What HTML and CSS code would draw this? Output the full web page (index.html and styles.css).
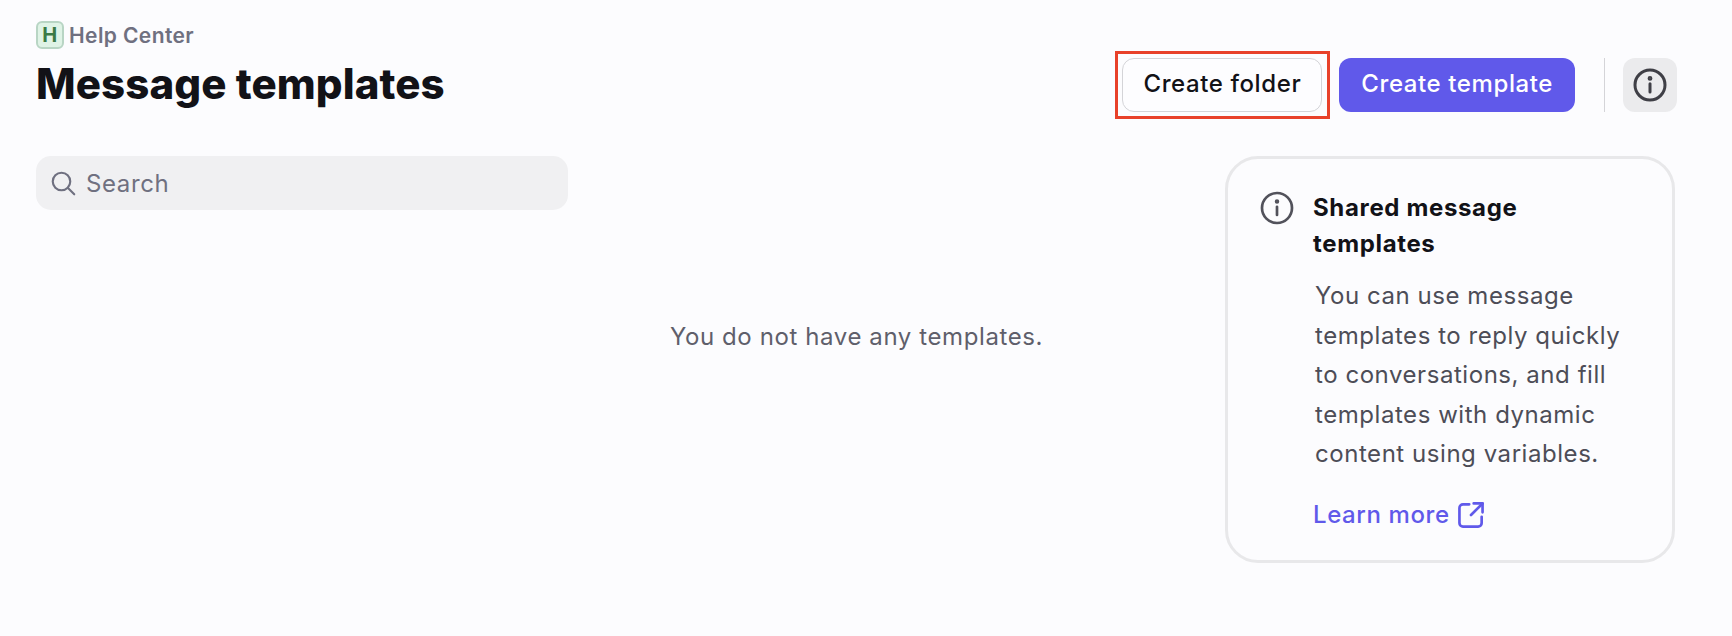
FILE: index.html
```html
<!DOCTYPE html>
<html lang="en">
<head>
  <meta charset="UTF-8" />
  <meta name="viewport" content="width=device-width, initial-scale=1.0"/>
  <title>Message templates</title>
  <link rel="stylesheet" href="styles.css">
</head>
<body>

  <header class="page-header">
    <div class="title-block">
      <div class="workspace">
        <span class="workspace-badge">H</span>
        <span>Help Center</span>
      </div>
      <h1>Message templates</h1>
    </div>
    <div class="actions">
      <button class="btn btn-outline">Create folder</button>
      <button class="btn btn-primary">Create template</button>
      <span class="divider"></span>
      <button class="btn-icon" aria-label="Info">
        <svg width="36" height="36" viewBox="0 0 24 24" fill="none" stroke="#3f3f46" stroke-width="2" stroke-linecap="round">
          <circle cx="12" cy="12" r="10"/>
          <path d="M12 11.200v5.400"/>
          <circle cx="12" cy="7.600" r="0.6" fill="#3f3f46"/>
        </svg>
      </button>
    </div>
  </header>

  <main class="content">
    <div class="search">
      <svg width="30" height="30" viewBox="0 0 24 24" fill="none" stroke="#6f7080" stroke-width="1.7" stroke-linecap="round">
        <circle cx="10.800" cy="10.800" r="7"/>
        <path d="M16 16l5 5"/>
      </svg>
      <input type="text" placeholder="Search">
    </div>

    <p class="empty">You do not have any templates.</p>

    <aside class="info-card">
      <svg class="info-card-icon" width="36" height="36" viewBox="0 0 24 24" fill="none" stroke="#52525b" stroke-width="1.800" stroke-linecap="round">
        <circle cx="12" cy="12" r="10"/>
        <path d="M12 11.200v5.400"/>
        <circle cx="12" cy="7.600" r="0.6" fill="#52525b"/>
      </svg>
      <div class="info-card-body">
        <h3>Shared message templates</h3>
        <p>You can use message templates to reply quickly to conversations, and fill templates with dynamic content using variables.</p>
        <a href="#" class="learn-more">
          Learn more
          <svg width="32" height="32" viewBox="0 0 18 18" fill="none" stroke="currentColor" stroke-width="1.5" stroke-linecap="round" stroke-linejoin="round">
            <path d="M8 3H4.500A2 2 0 0 0 2.500 5v8.500a2 2 0 0 0 2 2H13a2 2 0 0 0 2-2V10"/>
            <path d="M10.500 2.500h5v5"/>
            <path d="M15.500 2.500L9 9"/>
          </svg>
        </a>
      </div>
    </aside>
  </main>

</body>
</html>
```

FILE: styles.css
```css
:root {
  --bg-color: #fcfcfe;
  --text-color: #121217;
  --muted: #6f7080;
  --accent: #6059ea;
}

body {
  font-family: Inter, 'Liberation Sans', sans-serif;
  background-color: var(--bg-color);
  color: var(--text-color);
  margin: 0;
  padding: 21px 55px 0 36px;
}

.page-header {
  display: flex;
  justify-content: space-between;
  align-items: flex-end;
}

.workspace {
  display: flex;
  align-items: center;
  gap: 5px;
  font-size: 21px;
  font-weight: 600;
  letter-spacing: 0.4px;
  color: var(--muted);
}

.workspace-badge {
  width: 28px;
  height: 28px;
  box-sizing: border-box;
  display: flex;
  align-items: center;
  justify-content: center;
  background: #dff3e6;
  border: 2px solid #b8d5c4;
  border-radius: 6px;
  color: #3b7a45;
  font-weight: 700;
  font-size: 20px;
}

h1 {
  margin: 8px 0 1px;
  font-size: 42px;
  line-height: 54px;
  font-weight: 800;
  letter-spacing: 0.1px;
}

.actions {
  display: flex;
  align-items: center;
  gap: 17px;
}

.btn {
  height: 54px;
  box-sizing: border-box;
  padding: 0 21px 3px;
  font-family: inherit;
  font-size: 24px;
  font-weight: 450;
  letter-spacing: 0.6px;
  border-radius: 12px;
  border: 1px solid transparent;
}

.btn-outline {
  position: relative;
  padding: 0 20px 3px;
  background: #fdfdff;
  color: var(--text-color);
  border: 1px solid #d4d4d8;
}

/* red annotation box round the button */
.btn-outline::after {
  content: "";
  position: absolute;
  inset: -8px -9px -8px -8px;
  border: 3px solid #e8412a;
}

.btn-primary {
  background: var(--accent);
  color: white;
}

.divider {
  width: 1px;
  height: 54px;
  background: #d4d4d8;
  margin: 0 1px 0 12px;
}

.btn-icon {
  width: 54px;
  height: 54px;
  padding: 0;
  display: flex;
  align-items: center;
  justify-content: center;
  background: #ebebed;
  border: none;
  border-radius: 12px;
}

.content {
  display: grid;
  margin-top: 44px;
}

.content > * {
  grid-area: 1 / 1;
}

.search {
  width: 532px;
  height: 54px;
  box-sizing: border-box;
  padding: 0 12px;
  display: flex;
  align-items: center;
  gap: 8px;
  align-self: start;
  background: #f0f0f2;
  border-radius: 15px;
}

.search input {
  border: none;
  background: transparent;
  outline: none;
  flex: 1;
  font-family: inherit;
  font-size: 24px;
  letter-spacing: 0.6px;
  padding: 0;
}

.search input::placeholder {
  color: var(--muted);
  opacity: 1;
}

.empty {
  justify-self: center;
  margin: 163px 0 0;
  font-size: 24px;
  line-height: 36px;
  letter-spacing: 0.6px;
  color: #5f5f6b;
}

.info-card {
  justify-self: end;
  width: 450px;
  height: 407px;
  margin-right: 2px;
  box-sizing: border-box;
  padding: 31px 30px 31px 31px;
  display: flex;
  gap: 18px;
  border: 3px solid #e8e8ea;
  border-radius: 33px;
}

.info-card-icon {
  flex-shrink: 0;
}

.info-card h3 {
  margin: 0;
  font-size: 24px;
  line-height: 36px;
  font-weight: 700;
  letter-spacing: 0.65px;
}

.info-card p {
  margin: 14px 0 0 2px;
  font-size: 24px;
  line-height: 39.500px;
  letter-spacing: 0.55px;
  color: #4d4d57;
}

.learn-more {
  display: flex;
  align-items: center;
  gap: 5px;
  margin-top: 25px;
  font-size: 24px;
  font-weight: 500;
  letter-spacing: 0.6px;
  color: var(--accent);
  text-decoration: none;
}
```
